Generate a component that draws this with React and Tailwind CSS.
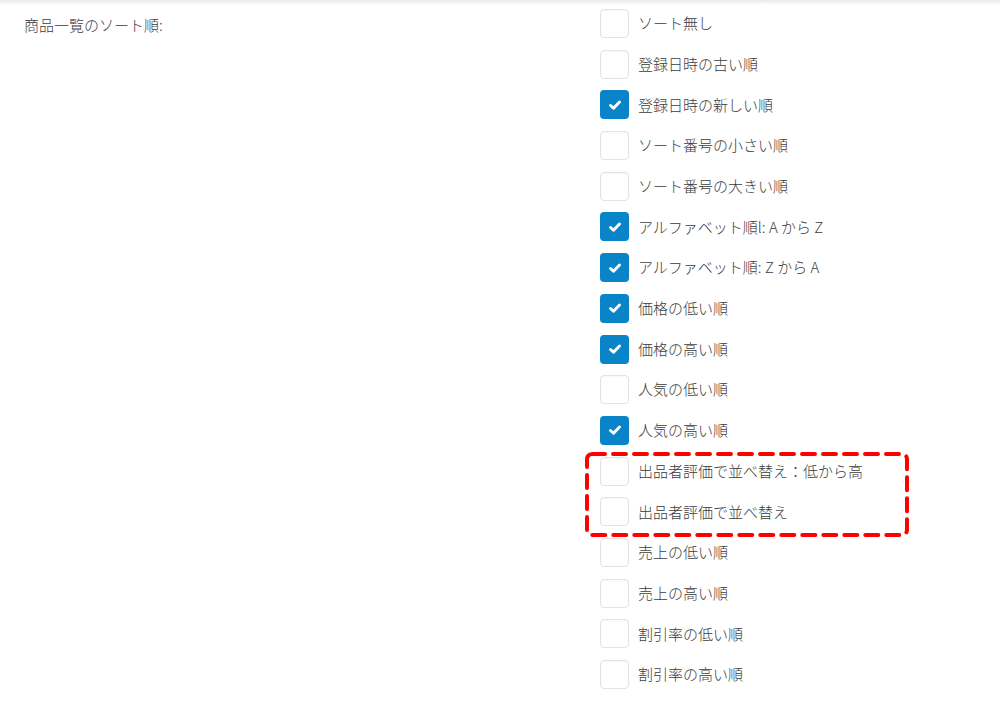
import React from 'react'

const options = [
  { label: 'ソート無し', checked: false },
  { label: '登録日時の古い順', checked: false },
  { label: '登録日時の新しい順', checked: true },
  { label: 'ソート番号の小さい順', checked: false },
  { label: 'ソート番号の大きい順', checked: false },
  { label: 'アルファベット順l: A から Z', checked: true },
  { label: 'アルファベット順: Z から A', checked: true },
  { label: '価格の低い順', checked: true },
  { label: '価格の高い順', checked: true },
  { label: '人気の低い順', checked: false },
  { label: '人気の高い順', checked: true },
  { label: '出品者評価で並べ替え：低から高', checked: false, marked: true },
  { label: '出品者評価で並べ替え', checked: false, marked: true },
  { label: '売上の低い順', checked: false },
  { label: '売上の高い順', checked: false },
  { label: '割引率の低い順', checked: false },
  { label: '割引率の高い順', checked: false },
]

const Box = ({ checked }) =>
  checked ? (
    <span className="flex h-[29px] w-[29px] shrink-0 items-center justify-center rounded-[4px] bg-[#0a84c8]">
      <svg width="14" height="12" viewBox="0 0 14 12">
        <path d="M2.5 6.5 L5.5 9.2 L11.5 3" fill="none" stroke="#fff" strokeWidth="3" strokeLinecap="round" strokeLinejoin="round" />
      </svg>
    </span>
  ) : (
    <span className="h-[29px] w-[29px] shrink-0 rounded-[4px] border border-[#e3e3e3] bg-white shadow-[inset_0_1px_2px_rgba(0,0,0,0.04)]" />
  )

const Row = ({ option }) => (
  <label className="flex h-[29px] items-center gap-[9px]">
    <Box checked={option.checked} />
    <span className="whitespace-pre text-[15px] font-light text-[#3c3c3c]">{option.label}</span>
  </label>
)

export default function App() {
  const before = options.slice(0, 11)
  const marked = options.filter((o) => o.marked)
  const after = options.slice(13)

  return (
    <div className="min-h-[709px] bg-white" style={{ fontFamily: '"Noto Sans CJK JP", "Noto Sans", sans-serif' }}>
      <div className="h-[5px] bg-gradient-to-b from-[#e9e9e9] to-white" />
      <div className="grid grid-cols-[576px_1fr] pl-6 pt-[4px]">
        <div className="pt-[5px] text-[15px] font-light text-[#3c3c3c]">商品一覧のソート順:</div>
        <div className="flex flex-col gap-[11.7px]">
          {before.map((o) => (
            <Row key={o.label} option={o} />
          ))}
          <div className="relative flex flex-col gap-[11.7px]">
            {marked.map((o) => (
              <Row key={o.label} option={o} />
            ))}
            <svg className="pointer-events-none absolute left-[-15px] top-[-4.5px]" width="324" height="85" viewBox="0 0 324 85">
              <rect x="2" y="2" width="320" height="81" rx="5" fill="none" stroke="#f00" strokeWidth="4" strokeDasharray="13 8" strokeLinecap="round" />
            </svg>
          </div>
          {after.map((o) => (
            <Row key={o.label} option={o} />
          ))}
        </div>
      </div>
    </div>
  )
}
